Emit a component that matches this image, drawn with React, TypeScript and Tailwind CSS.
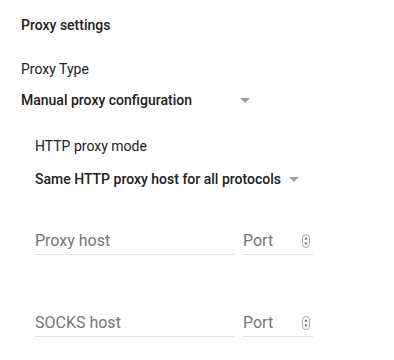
import React from "react";

function Caret() {
  return (
    <svg width="10" height="5" viewBox="0 0 10 5" className="shrink-0">
      <path d="M0 0h10L5 5z" fill="#9e9e9e" />
    </svg>
  );
}

function Spinner() {
  return (
    <svg width="8" height="14" viewBox="0 0 8 14" className="shrink-0">
      <rect x="0.5" y="0.5" width="7" height="13" rx="3.5" fill="#fff" stroke="#a8a8a8" />
      <path d="M2.3 5.5L4 3.3 5.7 5.5z" fill="#555" />
      <path d="M2.3 8.5L4 10.7 5.7 8.5z" fill="#555" />
    </svg>
  );
}

function Field({ placeholder, port }: { placeholder: string; port: string }) {
  return (
    <div className="flex gap-2">
      <div className="w-[200px] border-b border-[#e0e0e0] pb-[3px] text-[16px] text-[#757575] leading-[20px]">
        {placeholder}
      </div>
      <div className="w-[70px] border-b border-[#e0e0e0] pb-[3px] flex items-center justify-between pr-[3px] text-[16px] text-[#757575] leading-[20px]">
        <span>{port}</span>
        <Spinner />
      </div>
    </div>
  );
}

export default function App() {
  return (
    <div
      className="w-[394px] h-[360px] bg-white overflow-hidden text-[#212121]"
      style={{ fontFamily: "Roboto, 'Liberation Sans', sans-serif" }}
    >
      <div className="pl-[21px] pt-[15px]">
        <h2 className="text-[14px] font-medium leading-[20px]">Proxy settings</h2>

        <div className="mt-[24px] text-[14px] leading-[20px]">Proxy Type</div>
        <div className="mt-[11px] w-[229px] flex items-center justify-between text-[14px] font-medium leading-[20px]">
          <span>Manual proxy configuration</span>
          <Caret />
        </div>

        <div className="pl-[14px]">
          <div className="mt-[26px] text-[14px] leading-[20px]">HTTP proxy mode</div>
          <div className="mt-[13px] flex items-center gap-[8px] text-[14px] font-medium leading-[20px]">
            <span>Same HTTP proxy host for all protocols</span>
            <Caret />
          </div>

          <div className="mt-[42px]">
            <Field placeholder="Proxy host" port="Port" />
          </div>
          <div className="mt-[58px]">
            <Field placeholder="SOCKS host" port="Port" />
          </div>
        </div>
      </div>
    </div>
  );
}
